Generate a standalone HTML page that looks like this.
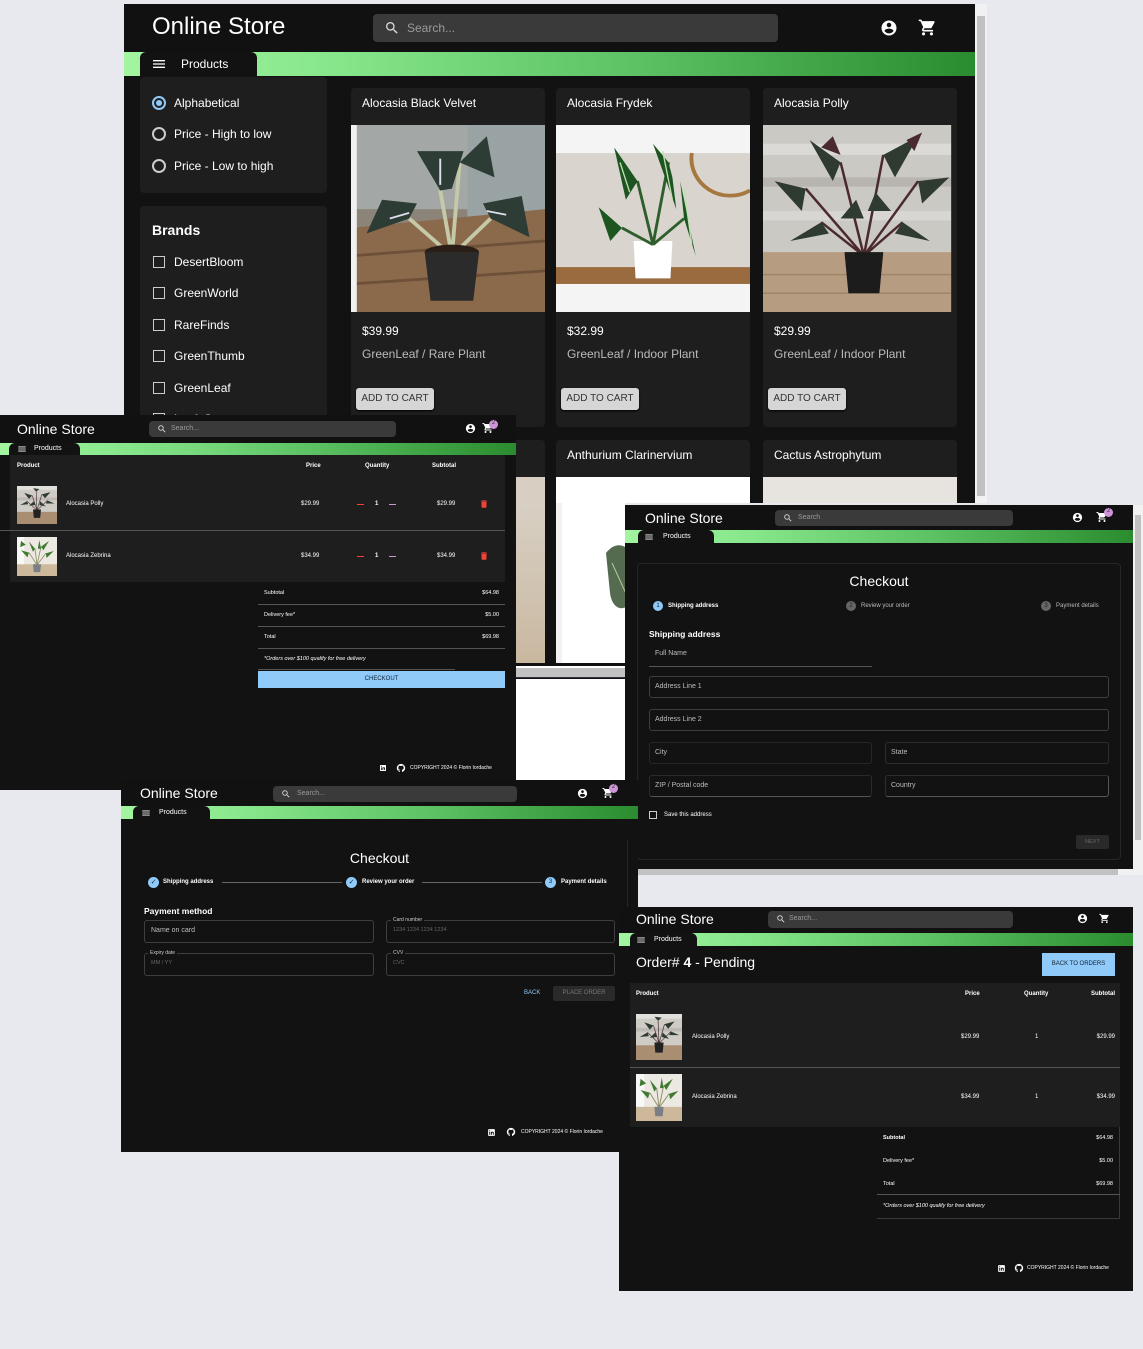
<!DOCTYPE html>
<html><head><meta charset="utf-8">
<style>
*{margin:0;padding:0;box-sizing:border-box}
body{width:1143px;height:1349px;background:#e8e9ee;position:relative;overflow:hidden;font-family:"Liberation Sans",Arial,sans-serif;color:#fff}
.a{position:absolute}
.win{position:absolute;background:#121212;overflow:hidden}
.hdr{position:absolute;left:0;right:0;top:0;background:#111}
.grn{position:absolute;left:0;right:0;background:linear-gradient(90deg,#a3f5a0 0%,#86e68a 25%,#5cc263 60%,#2a8c2e 100%)}
.tab{position:absolute;top:0;bottom:0;background:#121212;border-radius:6px 6px 0 0}
.srch{position:absolute;background:#3a3a3a;border-radius:4px;color:#9a9a9a}
.panel{position:absolute;background:#1e1e1e;border-radius:4px}
.card{position:absolute;background:#1e1e1e;border-radius:4px;overflow:hidden;width:194px}
.ct{position:absolute;left:11px;top:8px;font-size:12px}
.img{position:absolute;left:0;top:37px;width:194px;height:187px}
.btn{position:absolute;background:#d6d6d6;color:#333;border-radius:3px;text-align:center;box-shadow:0 1px 2px #000}
.fld{position:absolute;border:1px solid #3e3e3e;border-radius:3px}
.lbl{position:absolute;color:#bdbdbd}
svg{display:block}
</style></head><body>
<svg width="0" height="0" style="position:absolute">
<defs>
<symbol id="cart" viewBox="0 0 24 24"><path fill="#fff" d="M7 18c-1.1 0-2 .9-2 2s.9 2 2 2 2-.9 2-2-.9-2-2-2zM1 2v2h2l3.6 7.59-1.35 2.45c-.16.28-.25.61-.25.96 0 1.1.9 2 2 2h12v-2H7.42c-.14 0-.25-.11-.25-.25l.03-.12.9-1.63h7.45c.75 0 1.41-.41 1.75-1.03l3.58-6.49A1 1 0 0 0 20 4H5.21l-.94-2H1zm16 16c-1.1 0-2 .9-2 2s.9 2 2 2 2-.9 2-2-.9-2-2-2z"/></symbol>
<symbol id="user" viewBox="0 0 24 24"><path fill="#fff" d="M12 2C6.48 2 2 6.48 2 12s4.48 10 10 10 10-4.48 10-10S17.52 2 12 2zm0 3c1.66 0 3 1.34 3 3s-1.34 3-3 3-3-1.34-3-3 1.34-3 3-3zm0 14.2c-2.5 0-4.71-1.28-6-3.22.03-1.99 4-3.08 6-3.08 1.99 0 5.97 1.09 6 3.08-1.29 1.94-3.5 3.22-6 3.22z"/></symbol>
<symbol id="search" viewBox="0 0 24 24"><path fill="#ddd" d="M15.5 14h-.79l-.28-.27A6.47 6.47 0 0 0 16 9.5 6.5 6.5 0 1 0 9.5 16c1.61 0 3.09-.59 4.23-1.57l.27.28v.79l5 4.99L20.49 19l-4.99-5zm-6 0C7.01 14 5 11.99 5 9.5S7.01 5 9.5 5 14 7.01 14 9.5 11.99 14 9.5 14z"/></symbol>
<symbol id="menu" viewBox="0 0 24 24"><path fill="#fff" d="M3 18h18v-2H3v2zm0-5h18v-2H3v2zm0-7v2h18V6H3z"/></symbol>
<symbol id="trash" viewBox="0 0 24 24"><path fill="#f44336" d="M6 19c0 1.1.9 2 2 2h8c1.1 0 2-.9 2-2V7H6v12zM19 4h-3.5l-1-1h-5l-1 1H5v2h14V4z"/></symbol>
<symbol id="gh" viewBox="0 0 24 24"><path fill="#fff" d="M12 2A10 10 0 0 0 8.84 21.5c.5.08.66-.23.66-.5v-1.69c-2.77.6-3.36-1.34-3.36-1.34-.46-1.16-1.11-1.47-1.11-1.47-.91-.62.07-.6.07-.6 1 .07 1.53 1.03 1.53 1.03.87 1.52 2.34 1.07 2.91.83.09-.65.35-1.09.63-1.34-2.22-.25-4.55-1.11-4.55-4.92 0-1.11.38-2 1.03-2.71-.1-.25-.45-1.29.1-2.64 0 0 .84-.27 2.75 1.02.79-.22 1.65-.33 2.5-.33.85 0 1.71.11 2.5.33 1.91-1.29 2.75-1.02 2.75-1.02.55 1.35.2 2.39.1 2.64.65.71 1.03 1.6 1.03 2.71 0 3.82-2.34 4.66-4.57 4.91.36.31.69.92.69 1.85V21c0 .27.16.59.67.5A10 10 0 0 0 12 2z"/></symbol>
<symbol id="li" viewBox="0 0 24 24"><path fill="#fff" d="M19 3H5a2 2 0 0 0-2 2v14a2 2 0 0 0 2 2h14a2 2 0 0 0 2-2V5a2 2 0 0 0-2-2zM8.5 18H6v-8h2.5v8zM7.25 8.8a1.4 1.4 0 1 1 0-2.8 1.4 1.4 0 0 1 0 2.8zM18 18h-2.5v-4c0-1-.4-1.7-1.3-1.7-.8 0-1.2.5-1.3 1.1V18h-2.5v-8H13v1.1c.4-.6 1.1-1.3 2.4-1.3 1.7 0 2.6 1.1 2.6 3.4V18z"/></symbol>
<symbol id="polly" viewBox="0 0 100 100" preserveAspectRatio="none"><rect width="100" height="100" fill="#cfccc6"/><rect y="0" width="100" height="10" fill="#e2e0dc"/><rect y="30" width="100" height="8" fill="#bdbab4"/><rect y="68" width="100" height="32" fill="#a98e72"/><path d="M50 64 L38 25 M50 64 L62 22 M50 64 L25 40 M50 64 L76 38 M50 64 L48 15" stroke="#4a2e30" stroke-width="1.5"/><path fill="#2e3b32" d="M38 25 L18 18 L30 34Z M62 22 L84 16 L70 32Z M25 40 L8 50 L28 48Z M76 38 L94 46 L72 46Z M48 15 L40 6 L56 8Z M42 40 L30 52 L46 50Z M58 40 L72 54 L56 50Z"/><path fill="#222" d="M40 62 h20 l-2 22 h-16z"/></symbol>
<symbol id="zeb" viewBox="0 0 100 100" preserveAspectRatio="none"><rect width="100" height="100" fill="#ece8e2"/><rect x="0" width="18" height="70" fill="#f8f8f6"/><rect y="70" width="100" height="30" fill="#cdb89c"/><path d="M50 72 L45 30 M50 72 L60 25 M50 72 L30 40 M50 72 L72 42" stroke="#8b8a62" stroke-width="2"/><path fill="#3e7a30" d="M45 30 L30 12 L40 38Z M60 25 L80 10 L66 34Z M30 40 L10 34 L26 52Z M72 42 L92 36 L74 54Z M52 30 L56 8 L60 30Z M10 10 L22 20 L8 26Z"/><path fill="#7a7f86" d="M40 70 h20 l-2 20 h-16z"/></symbol>
<symbol id="velvet" viewBox="0 0 100 100" preserveAspectRatio="none"><rect width="100" height="100" fill="#8c8478"/><rect width="100" height="45" fill="#a3a8a6"/><rect x="60" width="40" height="60" fill="#9aa3a4"/><path d="M0 55 L100 45 L100 100 L0 100Z" fill="#8b6a4c"/><path d="M0 70 L100 62 M0 85 L100 78" stroke="#6e5038" stroke-width="1.5"/><path d="M52 70 L46 35 M52 70 L30 50 M52 70 L72 50 M52 70 L56 20" stroke="#c5c9a8" stroke-width="2"/><path fill="#2d3c35" d="M46 35 L34 14 L58 14 L52 34Z M30 50 L8 58 L16 40 L34 42Z M72 50 L92 60 L88 38 L68 42Z M56 20 L70 6 L74 28Z"/><path d="M46 18 L46 32 M20 50 L30 47 M80 48 L70 46" stroke="#dde" stroke-width="1"/><ellipse cx="52" cy="68" rx="14" ry="4" fill="#2a1e16"/><path fill="#2b2b2b" d="M38 68 h28 l-3 26 h-22z"/><rect x="0" y="0" width="3" height="100" fill="#f0f0f0"/></symbol>
<symbol id="frydek" viewBox="0 0 100 100" preserveAspectRatio="none"><rect width="100" height="100" fill="#f4f4f4"/><rect y="15" width="100" height="70" fill="#d9d5ce"/><rect y="76" width="100" height="9" fill="#9a6b3e"/><path d="M70 15 A20 20 0 0 0 100 35" fill="none" stroke="#a6773e" stroke-width="2"/><path fill="#fff" d="M40 62 h20 l-1 20 h-18z"/><path d="M50 64 L42 30 M50 64 L58 20 M50 64 L34 55 M50 64 L66 50" stroke="#2d5e2c" stroke-width="1.5"/><path fill="#1d5520" d="M42 30 L30 12 L36 40Z M58 20 L50 10 L62 45 L60 28Z M34 55 L22 44 L28 62Z M66 50 L64 30 L72 70Z"/><path d="M33 20 L38 36 M55 14 L60 40 M66 34 L70 64" stroke="#bfe0b0" stroke-width=".7"/></symbol>
<symbol id="pollybig" viewBox="0 0 100 100" preserveAspectRatio="none"><rect width="100" height="100" fill="#cbc9c4"/><rect y="10" width="100" height="6" fill="#dcdad6"/><rect y="28" width="100" height="5" fill="#b8b5b0"/><rect y="46" width="100" height="5" fill="#d8d6d2"/><rect y="68" width="100" height="32" fill="#b69c80"/><path d="M0 80 L100 80 M0 90 L100 90" stroke="#a08668" stroke-width=".8"/><rect x="97" width="3" height="100" fill="#1e1e1e"/><path d="M52 70 L40 20 M52 70 L62 16 M52 70 L22 34 M52 70 L80 30 M52 70 L30 52 M52 70 L72 52" stroke="#4a2a2e" stroke-width="1.3"/><path fill="#2f3a30" d="M40 20 L24 8 L36 30Z M62 16 L80 6 L68 28Z M22 34 L6 30 L20 46Z M80 30 L96 28 L82 42Z M30 52 L14 62 L34 58Z M72 52 L86 62 L68 58Z M48 40 L40 50 L52 50Z M58 36 L66 46 L54 46Z"/><path fill="#4a2a30" d="M30 12 L36 6 L40 16Z M74 8 L82 4 L78 14Z"/><path fill="#1c1c1c" d="M42 68 h20 l-2 22 h-16z"/></symbol>
</defs></svg>

<!-- ===== MAIN WINDOW ===== -->
<div class="win" style="left:124px;top:4px;width:851px;height:499px">
 <div class="hdr" style="height:48px">
  <div class="a" style="left:28px;top:9px;font-size:24px">Online Store</div>
  <div class="srch" style="left:249px;top:10px;width:405px;height:28px">
   <svg class="a" style="left:11px;top:6px" width="16" height="16"><use href="#search"/></svg>
   <div class="a" style="left:34px;top:7px;font-size:12px">Search...</div>
  </div>
  <svg class="a" style="left:756px;top:15px" width="18" height="18"><use href="#user"/></svg>
  <svg class="a" style="left:794px;top:14px" width="19" height="19"><use href="#cart"/></svg>
 </div>
 <div class="grn" style="top:48px;height:24px"><div class="tab" style="left:16px;width:117px">
  <svg class="a" style="left:11px;top:4px" width="16" height="16"><use href="#menu"/></svg>
  <div class="a" style="left:41px;top:5px;font-size:12px">Products</div></div></div>
 <div class="panel" style="left:16px;top:73px;width:187px;height:116px">
  <div class="a" style="left:12px;top:19px;width:14px;height:14px;border:2px solid #90caf9;border-radius:50%"><div class="a" style="left:2px;top:2px;width:6px;height:6px;background:#90caf9;border-radius:50%"></div></div>
  <div class="a" style="left:34px;top:19px;font-size:12px">Alphabetical</div>
  <div class="a" style="left:12px;top:50px;width:14px;height:14px;border:2px solid #ccc;border-radius:50%"></div>
  <div class="a" style="left:34px;top:50px;font-size:12px">Price - High to low</div>
  <div class="a" style="left:12px;top:82px;width:14px;height:14px;border:2px solid #ccc;border-radius:50%"></div>
  <div class="a" style="left:34px;top:82px;font-size:12px">Price - Low to high</div>
 </div>
 <div class="panel" style="left:16px;top:202px;width:187px;height:260px">
  <div class="a" style="left:12px;top:16px;font-size:14px;font-weight:bold">Brands</div>
  <div class="a" style="left:13px;top:50px;width:12px;height:12px;border:1.5px solid #ccc"></div><div class="a" style="left:34px;top:49px;font-size:12px">DesertBloom</div>
  <div class="a" style="left:13px;top:81px;width:12px;height:12px;border:1.5px solid #ccc"></div><div class="a" style="left:34px;top:80px;font-size:12px">GreenWorld</div>
  <div class="a" style="left:13px;top:113px;width:12px;height:12px;border:1.5px solid #ccc"></div><div class="a" style="left:34px;top:112px;font-size:12px">RareFinds</div>
  <div class="a" style="left:13px;top:144px;width:12px;height:12px;border:1.5px solid #ccc"></div><div class="a" style="left:34px;top:143px;font-size:12px">GreenThumb</div>
  <div class="a" style="left:13px;top:176px;width:12px;height:12px;border:1.5px solid #ccc"></div><div class="a" style="left:34px;top:175px;font-size:12px">GreenLeaf</div>
  <div class="a" style="left:13px;top:207px;width:12px;height:12px;border:1.5px solid #ccc"></div><div class="a" style="left:34px;top:206px;font-size:12px">LeafyCo</div>
 </div>
 <div class="card" style="left:227px;top:84px;height:339px">
  <div class="ct">Alocasia Black Velvet</div>
  <svg class="img"><use href="#velvet" width="194" height="187"/></svg>
  <div class="a" style="left:11px;top:236px;font-size:12px">$39.99</div>
  <div class="a" style="left:11px;top:259px;font-size:12px;color:#bbb">GreenLeaf / Rare Plant</div>
  <div class="btn" style="left:5px;top:300px;width:78px;height:22px;font-size:10px;line-height:22px">ADD TO CART</div>
 </div>
 <div class="card" style="left:432px;top:84px;height:339px">
  <div class="ct">Alocasia Frydek</div>
  <svg class="img"><use href="#frydek" width="194" height="187"/></svg>
  <div class="a" style="left:11px;top:236px;font-size:12px">$32.99</div>
  <div class="a" style="left:11px;top:259px;font-size:12px;color:#bbb">GreenLeaf / Indoor Plant</div>
  <div class="btn" style="left:5px;top:300px;width:78px;height:22px;font-size:10px;line-height:22px">ADD TO CART</div>
 </div>
 <div class="card" style="left:639px;top:84px;height:339px">
  <div class="ct">Alocasia Polly</div>
  <svg class="img"><use href="#pollybig" width="194" height="187"/></svg>
  <div class="a" style="left:11px;top:236px;font-size:12px">$29.99</div>
  <div class="a" style="left:11px;top:259px;font-size:12px;color:#bbb">GreenLeaf / Indoor Plant</div>
  <div class="btn" style="left:5px;top:300px;width:78px;height:22px;font-size:10px;line-height:22px">ADD TO CART</div>
 </div>
 <div class="card" style="left:227px;top:436px;height:100px"><div class="img" style="background:#d8cfc2"></div></div>
 <div class="card" style="left:432px;top:436px;height:100px"><div class="ct">Anthurium Clarinervium</div><div class="img" style="background:#fff"></div></div>
 <div class="card" style="left:639px;top:436px;height:100px"><div class="ct">Cactus Astrophytum</div><div class="img" style="background:#e7e3df"></div></div>
</div>
<div class="a" style="left:975px;top:4px;width:12px;height:499px;background:#f1f1f1"><div class="a" style="left:2px;top:12px;width:8px;height:480px;background:#c1c1c1"></div></div>

<!-- region between windows -->
<div class="a" style="left:516px;top:503px;width:109px;height:277px;background:#121212">
 <div class="a" style="left:0;top:0;width:29px;height:160px;background:linear-gradient(180deg,#d8d0c4,#c9b8a0)"></div>
 <div class="a" style="left:40px;top:0;width:69px;height:160px;background:#fff;border-left:6px solid #f2f2f2">
  <svg width="69" height="160"><path d="M44 50 C52 40 60 40 69 48 L69 100 C60 110 50 105 48 90Z" fill="#556b50"/><path d="M50 60 L66 95" stroke="#b8c8a0" stroke-width="1"/></svg></div>
 <div class="a" style="left:0;top:163px;width:109px;height:2px;background:#fff"></div>
 <div class="a" style="left:0;top:165px;width:109px;height:10px;background:#c2c2c2;border-bottom:1px solid #334"></div>
 <div class="a" style="left:0;top:176px;width:109px;height:101px;background:#fff"></div>
</div>

<!-- ===== CART WINDOW ===== -->
<div class="win" style="left:0;top:415px;width:516px;height:375px">
 <div class="hdr" style="height:28px">
  <div class="a" style="left:17px;top:6px;font-size:14px">Online Store</div>
  <div class="srch" style="left:149px;top:6px;width:247px;height:16px"><svg class="a" style="left:8px;top:3px" width="10" height="10"><use href="#search"/></svg><div class="a" style="left:22px;top:4px;font-size:7px">Search...</div></div>
  <svg class="a" style="left:465px;top:8px" width="11" height="11"><use href="#user"/></svg>
  <svg class="a" style="left:482px;top:7px" width="12" height="12"><use href="#cart"/></svg>
  <div class="a" style="left:489px;top:5px;width:9px;height:9px;border-radius:50%;background:#ce93d8;font-size:6px;text-align:center;color:#333">2</div>
 </div>
 <div class="grn" style="top:28px;height:12px"><div class="tab" style="left:9px;width:71px"><svg class="a" style="left:8px;top:1px" width="10" height="10"><use href="#menu"/></svg><div class="a" style="left:25px;top:2px;font-size:7px">Products</div></div></div>
 <div class="panel" style="left:10px;top:40px;width:495px;height:127px;border-radius:0;font-size:6px;font-weight:bold">
  <div class="a" style="left:7px;top:8px">Product</div><div class="a" style="left:296px;top:8px">Price</div><div class="a" style="left:355px;top:8px">Quantity</div><div class="a" style="left:422px;top:8px">Subtotal</div>
  <svg class="a" style="left:7px;top:31px" width="40" height="38"><use href="#polly" width="40" height="38"/></svg>
  <div class="a" style="left:56px;top:46px;font-weight:normal">Alocasia Polly</div>
  <div class="a" style="left:291px;top:46px;font-weight:normal">$29.99</div>
  <div class="a" style="left:347px;top:49px;width:7px;height:1px;background:#f44336"></div><div class="a" style="left:365px;top:46px">1</div><div class="a" style="left:379px;top:49px;width:7px;height:1px;background:#ce93d8"></div>
  <div class="a" style="left:427px;top:46px;font-weight:normal">$29.99</div>
  <svg class="a" style="left:469px;top:44px" width="10" height="10"><use href="#trash"/></svg>
  <div class="a" style="left:-10px;top:75px;width:505px;height:1px;background:#555"></div>
  <svg class="a" style="left:7px;top:82px" width="40" height="39"><use href="#zeb" width="40" height="39"/></svg>
  <div class="a" style="left:56px;top:98px;font-weight:normal">Alocasia Zebrina</div>
  <div class="a" style="left:291px;top:98px;font-weight:normal">$34.99</div>
  <div class="a" style="left:347px;top:101px;width:7px;height:1px;background:#f44336"></div><div class="a" style="left:365px;top:98px">1</div><div class="a" style="left:379px;top:101px;width:7px;height:1px;background:#ce93d8"></div>
  <div class="a" style="left:427px;top:98px;font-weight:normal">$34.99</div>
  <svg class="a" style="left:469px;top:96px" width="10" height="10"><use href="#trash"/></svg>
 </div>
 <div class="a" style="left:258px;top:167px;width:247px;font-size:5.5px">
  <div class="a" style="left:6px;top:8px">Subtotal</div><div class="a" style="right:6px;top:8px">$64.98</div>
  <div class="a" style="left:0;top:22px;width:247px;height:1px;background:#555"></div>
  <div class="a" style="left:6px;top:30px">Delivery fee*</div><div class="a" style="right:6px;top:30px">$5.00</div>
  <div class="a" style="left:0;top:44px;width:247px;height:1px;background:#555"></div>
  <div class="a" style="left:6px;top:52px">Total</div><div class="a" style="right:6px;top:52px">$69.98</div>
  <div class="a" style="left:0;top:66px;width:247px;height:1px;background:#555"></div>
  <div class="a" style="left:6px;top:74px;font-style:italic;white-space:nowrap">*Orders over $100 qualify for free delivery</div>
  <div class="a" style="left:0;top:87px;width:197px;height:1px;background:#555"></div>
 </div>
 <div class="a" style="left:258px;top:256px;width:247px;height:17px;background:#90caf9;color:#123;font-size:6px;text-align:center;line-height:17px">CHECKOUT</div>
 <svg class="a" style="left:379px;top:349px" width="8" height="8"><use href="#li"/></svg>
 <svg class="a" style="left:396px;top:348px" width="10" height="10"><use href="#gh"/></svg>
 <div class="a" style="left:410px;top:350px;font-size:5px;white-space:nowrap">COPYRIGHT 2024 © Florin Iordache</div>
</div>

<!-- ===== SHIPPING CHECKOUT ===== -->
<div class="win" style="left:625px;top:505px;width:508px;height:365px">
 <div class="hdr" style="height:25px">
  <div class="a" style="left:20px;top:5px;font-size:14px">Online Store</div>
  <div class="srch" style="left:150px;top:5px;width:238px;height:16px"><svg class="a" style="left:8px;top:3px" width="10" height="10"><use href="#search"/></svg><div class="a" style="left:23px;top:4px;font-size:7px">Search</div></div>
  <svg class="a" style="left:447px;top:7px" width="11" height="11"><use href="#user"/></svg>
  <svg class="a" style="left:471px;top:6px" width="12" height="12"><use href="#cart"/></svg>
  <div class="a" style="left:479px;top:3px;width:9px;height:9px;border-radius:50%;background:#ce93d8;font-size:6px;text-align:center;color:#333">2</div>
 </div>
 <div class="grn" style="top:25px;height:13px"><div class="tab" style="left:13px;width:76px"><svg class="a" style="left:6px;top:2px" width="10" height="10"><use href="#menu"/></svg><div class="a" style="left:25px;top:3px;font-size:7px">Products</div></div></div>
 <div class="a" style="left:12px;top:58px;width:484px;height:297px;border:1px solid #262626;border-radius:4px"></div>
 <div class="a" style="left:0;width:508px;top:68px;text-align:center;font-size:14px;padding-left:0;left:0"><span style="position:relative;left:0">Checkout</span></div>
 <div class="a" style="left:28px;top:96px;width:10px;height:10px;border-radius:50%;background:#90caf9;font-size:6px;text-align:center;line-height:10px;color:#123">1</div>
 <div class="a" style="left:43px;top:98px;font-size:6px;font-weight:bold">Shipping address</div>
 <div class="a" style="left:221px;top:96px;width:10px;height:10px;border-radius:50%;background:#666;font-size:6px;text-align:center;line-height:10px;color:#222">2</div>
 <div class="a" style="left:236px;top:98px;font-size:6px;color:#bbb">Review your order</div>
 <div class="a" style="left:416px;top:96px;width:10px;height:10px;border-radius:50%;background:#666;font-size:6px;text-align:center;line-height:10px;color:#222">3</div>
 <div class="a" style="left:431px;top:98px;font-size:6px;color:#bbb">Payment details</div>
 <div class="a" style="left:24px;top:124px;font-size:8.5px;font-weight:bold">Shipping address</div>
 <div class="a" style="left:24px;top:140px;width:223px;height:22px;border-bottom:1px solid #555"></div>
 <div class="lbl" style="left:30px;top:145px;font-size:7px">Full Name</div>
 <div class="fld" style="left:24px;top:171px;width:460px;height:22px"></div><div class="lbl" style="left:30px;top:178px;font-size:7px">Address Line 1</div>
 <div class="fld" style="left:24px;top:204px;width:460px;height:22px"></div><div class="lbl" style="left:30px;top:211px;font-size:7px">Address Line 2</div>
 <div class="fld" style="left:24px;top:237px;width:223px;height:22px;border-color:#262626"></div><div class="lbl" style="left:30px;top:244px;font-size:7px">City</div>
 <div class="fld" style="left:260px;top:237px;width:224px;height:22px;border-color:#2e2e2e"></div><div class="lbl" style="left:266px;top:244px;font-size:7px">State</div>
 <div class="fld" style="left:24px;top:270px;width:223px;height:22px;border-color:#2a2a2a;border-bottom-color:#555"></div><div class="lbl" style="left:30px;top:277px;font-size:7px">ZIP / Postal code</div>
 <div class="fld" style="left:260px;top:270px;width:224px;height:22px;border-color:#2e2e2e;border-bottom-color:#555;border-right-color:#555"></div><div class="lbl" style="left:266px;top:277px;font-size:7px">Country</div>
 <div class="a" style="left:24px;top:306px;width:8px;height:8px;border:1px solid #ccc"></div>
 <div class="a" style="left:39px;top:307px;font-size:6px">Save this address</div>
 <div class="a" style="left:451px;top:330px;width:33px;height:14px;background:#2a2a2a;border-radius:2px;color:#666;font-size:5.5px;text-align:center;line-height:14px">NEXT</div>
</div>
<div class="a" style="left:1133px;top:505px;width:10px;height:365px;background:#f1f1f1"><div class="a" style="left:2px;top:10px;width:6px;height:325px;background:#c1c1c1"></div></div>
<div class="a" style="left:638px;top:869px;width:505px;height:6px;background:#f1f1f1"><div class="a" style="left:0;top:0;width:480px;height:6px;background:#c1c1c1"></div></div>

<!-- ===== PAYMENT CHECKOUT ===== -->
<div class="win" style="left:121px;top:780px;width:517px;height:372px">
 <div class="hdr" style="height:26px">
  <div class="a" style="left:19px;top:5px;font-size:14px">Online Store</div>
  <div class="srch" style="left:152px;top:6px;width:244px;height:16px"><svg class="a" style="left:8px;top:3px" width="10" height="10"><use href="#search"/></svg><div class="a" style="left:24px;top:4px;font-size:7px">Search...</div></div>
  <svg class="a" style="left:456px;top:8px" width="11" height="11"><use href="#user"/></svg>
  <svg class="a" style="left:481px;top:7px" width="12" height="12"><use href="#cart"/></svg>
  <div class="a" style="left:488px;top:4px;width:9px;height:9px;border-radius:50%;background:#ce93d8;font-size:6px;text-align:center;color:#333">2</div>
 </div>
 <div class="grn" style="top:26px;height:13px"><div class="tab" style="left:12px;width:77px"><svg class="a" style="left:8px;top:2px" width="10" height="10"><use href="#menu"/></svg><div class="a" style="left:26px;top:3px;font-size:7px">Products</div></div></div>
 <div class="a" style="left:12px;top:60px;width:495px;height:170px;border-right:1px solid #262626"></div>
 <div class="a" style="left:0;top:70px;width:517px;text-align:center;font-size:14px">Checkout</div>
 <div class="a" style="left:27px;top:97px;width:11px;height:11px;border-radius:50%;background:#90caf9;color:#123;font-size:7px;text-align:center;line-height:11px">✓</div>
 <div class="a" style="left:42px;top:99px;font-size:6px;font-weight:bold">Shipping address</div>
 <div class="a" style="left:101px;top:102px;width:120px;height:1px;background:#666"></div>
 <div class="a" style="left:225px;top:97px;width:11px;height:11px;border-radius:50%;background:#90caf9;color:#123;font-size:7px;text-align:center;line-height:11px">✓</div>
 <div class="a" style="left:241px;top:99px;font-size:6px;font-weight:bold">Review your order</div>
 <div class="a" style="left:301px;top:102px;width:120px;height:1px;background:#666"></div>
 <div class="a" style="left:424px;top:97px;width:11px;height:11px;border-radius:50%;background:#90caf9;color:#123;font-size:6px;text-align:center;line-height:11px">3</div>
 <div class="a" style="left:440px;top:99px;font-size:6px;font-weight:bold">Payment details</div>
 <div class="a" style="left:23px;top:126px;font-size:8.5px;font-weight:bold">Payment method</div>
 <div class="fld" style="left:23px;top:140px;width:230px;height:23px"></div><div class="lbl" style="left:30px;top:147px;font-size:7px">Name on card</div>
 <div class="fld" style="left:265px;top:140px;width:229px;height:23px"></div><div class="a" style="left:270px;top:137px;font-size:5px;background:#121212;padding:0 2px;color:#ccc">Card number</div><div class="a" style="left:272px;top:147px;font-size:5.5px;color:#666">1234 1234 1234 1234</div>
 <div class="fld" style="left:23px;top:173px;width:230px;height:23px"></div><div class="a" style="left:27px;top:170px;font-size:5px;background:#121212;padding:0 2px;color:#ccc">Expiry date</div><div class="a" style="left:30px;top:180px;font-size:5.5px;color:#666">MM / YY</div>
 <div class="fld" style="left:265px;top:173px;width:229px;height:23px"></div><div class="a" style="left:270px;top:170px;font-size:5px;background:#121212;padding:0 2px;color:#ccc">CVV</div><div class="a" style="left:272px;top:180px;font-size:5.5px;color:#666">CVC</div>
 <div class="a" style="left:403px;top:210px;font-size:6px;color:#90caf9">BACK</div>
 <div class="a" style="left:432px;top:206px;width:62px;height:15px;background:#2a2a2a;border-radius:2px;color:#777;font-size:6px;text-align:center;line-height:15px">PLACE ORDER</div>
 <svg class="a" style="left:366px;top:348px" width="9" height="9"><use href="#li"/></svg>
 <svg class="a" style="left:385px;top:347px" width="10" height="10"><use href="#gh"/></svg>
 <div class="a" style="left:400px;top:349px;font-size:5px;white-space:nowrap">COPYRIGHT 2024 © Florin Iordache</div>
</div>

<!-- ===== ORDER WINDOW ===== -->
<div class="win" style="left:619px;top:907px;width:514px;height:384px">
 <div class="hdr" style="height:26px">
  <div class="a" style="left:17px;top:4px;font-size:14px">Online Store</div>
  <div class="srch" style="left:149px;top:4px;width:245px;height:17px"><svg class="a" style="left:8px;top:3px" width="10" height="10"><use href="#search"/></svg><div class="a" style="left:21px;top:4px;font-size:7px">Search...</div></div>
  <svg class="a" style="left:458px;top:6px" width="11" height="11"><use href="#user"/></svg>
  <svg class="a" style="left:480px;top:6px" width="11" height="11"><use href="#cart"/></svg>
 </div>
 <div class="grn" style="top:26px;height:13px"><div class="tab" style="left:11px;width:67px"><svg class="a" style="left:6px;top:2px" width="10" height="10"><use href="#menu"/></svg><div class="a" style="left:24px;top:3px;font-size:7px">Products</div></div></div>
 <div class="a" style="left:17px;top:47px;font-size:14px">Order# <b>4</b> - Pending</div>
 <div class="a" style="left:423px;top:46px;width:73px;height:23px;background:#90caf9;color:#123;font-size:6px;text-align:center;line-height:23px">BACK TO ORDERS</div>
 <div class="panel" style="left:11px;top:76px;width:490px;height:144px;border-radius:0;font-size:6px;font-weight:bold">
  <div class="a" style="left:6px;top:8px">Product</div><div class="a" style="left:335px;top:8px">Price</div><div class="a" style="left:394px;top:8px">Quantity</div><div class="a" style="right:5px;top:8px">Subtotal</div>
  <svg class="a" style="left:6px;top:31px" width="46" height="46"><use href="#polly" width="46" height="46"/></svg>
  <div class="a" style="left:62px;top:51px;font-weight:normal">Alocasia Polly</div>
  <div class="a" style="left:331px;top:51px;font-weight:normal">$29.99</div><div class="a" style="left:405px;top:51px;font-weight:normal">1</div><div class="a" style="right:5px;top:51px;font-weight:normal">$29.99</div>
  <div class="a" style="left:0;top:84px;width:490px;height:1px;background:#555"></div>
  <svg class="a" style="left:6px;top:91px" width="46" height="47"><use href="#zeb" width="46" height="47"/></svg>
  <div class="a" style="left:62px;top:111px;font-weight:normal">Alocasia Zebrina</div>
  <div class="a" style="left:331px;top:111px;font-weight:normal">$34.99</div><div class="a" style="left:405px;top:111px;font-weight:normal">1</div><div class="a" style="right:5px;top:111px;font-weight:normal">$34.99</div>
 </div>
 <div class="a" style="left:258px;top:220px;width:243px;height:92px;border-right:1px solid #3a3a3a;border-bottom:1px solid #3a3a3a;font-size:5.5px">
  <div class="a" style="left:6px;top:8px;font-weight:bold">Subtotal</div><div class="a" style="right:6px;top:8px">$64.98</div>
  <div class="a" style="left:6px;top:31px">Delivery fee*</div><div class="a" style="right:6px;top:31px">$5.00</div>
  <div class="a" style="left:6px;top:54px">Total</div><div class="a" style="right:6px;top:54px">$69.98</div>
  <div class="a" style="left:0;top:67px;width:243px;height:1px;background:#555"></div>
  <div class="a" style="left:6px;top:76px;font-style:italic;white-space:nowrap">*Orders over $100 qualify for free delivery</div>
 </div>
 <svg class="a" style="left:378px;top:357px" width="9" height="9"><use href="#li"/></svg>
 <svg class="a" style="left:395px;top:356px" width="10" height="10"><use href="#gh"/></svg>
 <div class="a" style="left:408px;top:358px;font-size:5px;white-space:nowrap">COPYRIGHT 2024 © Florin Iordache</div>
</div>
</body></html>
